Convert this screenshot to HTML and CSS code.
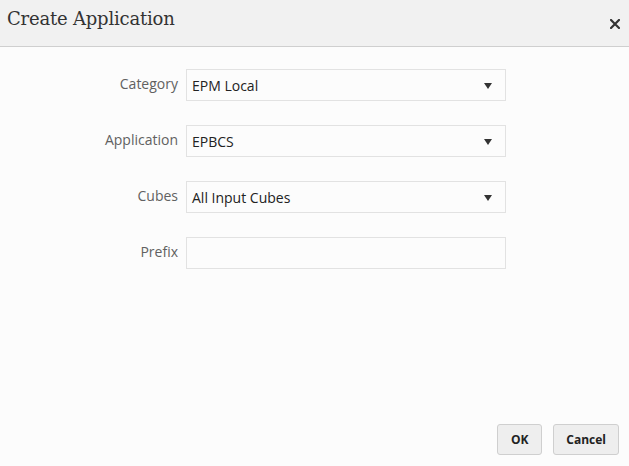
FILE: index.html
```html
<!DOCTYPE html>
<html>
<head>
<meta charset="utf-8">
<link rel="stylesheet" href="styles.css">
</head>
<body>
<div class="dialog">
  <header class="header">
    <h1 class="title">Create Application</h1>
    <svg class="close" width="10" height="10" viewBox="0 0 10 10"><path d="M1 1 L9 9 M9 1 L1 9" stroke="#333" stroke-width="2.2" stroke-linecap="square"/></svg>
  </header>
  <main class="body">
    <div class="row">
      <label class="label">Category</label>
      <div class="field select"><span>EPM Local</span><i class="arrow"></i></div>
    </div>
    <div class="row">
      <label class="label">Application</label>
      <div class="field select"><span>EPBCS</span><i class="arrow"></i></div>
    </div>
    <div class="row">
      <label class="label">Cubes</label>
      <div class="field select"><span>All Input Cubes</span><i class="arrow"></i></div>
    </div>
    <div class="row">
      <label class="label">Prefix</label>
      <div class="field"></div>
    </div>
  </main>
  <footer class="footer">
    <button class="btn ok">OK</button>
    <button class="btn">Cancel</button>
  </footer>
</div>
</body>
</html>
```

FILE: styles.css
```css
html, body {
  margin: 0;
  padding: 0;
}
body {
  width: 629px;
  height: 466px;
  background: #fcfcfc;
  font-family: "Open Sans", "Noto Sans", sans-serif;
  overflow: hidden;
}
.dialog {
  display: flex;
  flex-direction: column;
  height: 466px;
}
.header {
  height: 46px;
  background: #f1f1f1;
  border-bottom: 1px solid #cfcfcf;
  display: flex;
  align-items: center;
  justify-content: space-between;
  padding: 0 9px 0 7px;
  box-sizing: content-box;
}
.title {
  margin: 0;
  margin-top: -9px;
  font-family: "DejaVu Serif", Georgia, serif;
  font-weight: normal;
  font-size: 18px;
  color: #333;
  letter-spacing: -0.2px;
}
.close {
  margin-top: 1px;
}
.body {
  flex: 1;
  padding-top: 22px;
  display: flex;
  flex-direction: column;
  gap: 24px;
}
.row {
  display: flex;
  align-items: center;
}
.label {
  width: 186px;
  text-align: right;
  padding-right: 8px;
  box-sizing: border-box;
  color: #616161;
  font-size: 14px;
  margin-top: -3px;
}
.field {
  width: 320px;
  height: 32px;
  box-sizing: border-box;
  border: 1px solid #e2e2e2;
  background: #fcfcfc;
  display: flex;
  align-items: center;
  justify-content: space-between;
  padding: 0 13px 0 5px;
  font-size: 14px;
  color: #222;
}
.arrow {
  width: 0;
  height: 0;
  border-left: 4.5px solid transparent;
  border-right: 4.5px solid transparent;
  border-top: 6px solid #333;
  margin-top: 1px;
}
.footer {
  display: flex;
  justify-content: flex-end;
  gap: 11px;
  padding: 0 10px 11px 0;
}
.btn {
  height: 31px;
  min-width: 45px;
  padding: 0 12px;
  background: #eeeeee;
  border: 1px solid #cfcfcf;
  border-radius: 3px;
  font-family: "Open Sans", sans-serif;
  font-weight: bold;
  font-size: 12px;
  color: #222;
}
.btn.ok {
  width: 45px;
}
```
